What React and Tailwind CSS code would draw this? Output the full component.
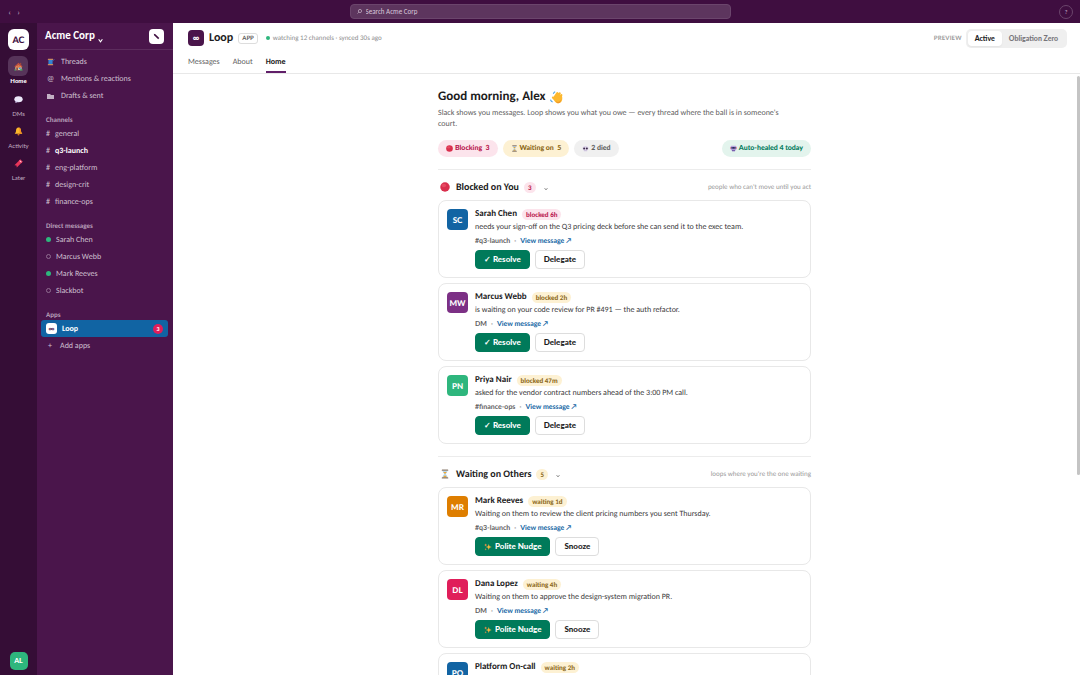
import React, { useState } from "react";

// Small colour glyphs, all on a 16x16 grid
const Glyph = ({ name, className }) => (
  <svg viewBox="0 0 16 16" className={className} aria-hidden="true">
    {name === "home" && (
      <>
        <rect x="2.5" y="7" width="11" height="7.5" fill="#e8c9a0" />
        <path d="M0.8 8.2 8 1.5 15.2 8.2 13.6 9.4 8 4.4 2.4 9.4Z" fill="#c8503c" />
        <path d="M3.6 8.4 8 4.4l4.4 4V10H3.6Z" fill="#e07a4a" />
        <rect x="10.8" y="1.6" width="2" height="3.6" fill="#a5483a" />
        <rect x="4" y="10" width="3" height="4.5" fill="#8a4b3a" />
        <rect x="8.6" y="10" width="3.4" height="2.6" fill="#3f9bd8" />
        <path d="M0.6 15c0-3 3-3 3 0ZM10.4 15c0-3.4 5-3.4 5 0Z" fill="#4aa564" />
      </>
    )}
    {name === "speech" && (
      <>
        <ellipse cx="8" cy="7.4" rx="7.4" ry="5.4" fill="#ece9fa" />
        <path d="M3.2 10 2.4 14.4 8 12Z" fill="#d5cdf0" />
      </>
    )}
    {name === "bell" && (
      <>
        <path d="M8 1c3.2 0 4.4 2.6 4.4 5.4 0 3 .8 4 2.4 5.6H1.2C2.8 10.4 3.6 9.4 3.6 6.4 3.6 3.6 4.8 1 8 1Z" fill="#fcb72b" />
        <path d="M8 1c3.2 0 4.4 2.6 4.4 5.4 0 3 .8 4 2.4 5.6H9.5C10.5 8 10 4 8 1Z" fill="#f29220" />
        <circle cx="8" cy="13.4" r="1.7" fill="#d97a1c" />
      </>
    )}
    {name === "bookmark" && (
      <>
        <path d="M11 .8 15.2 5 5 15.2 4.4 11.6.8 11Z" fill="#e8355a" />
        <path d="M11 .8 15.2 5 12.6 7.6 8.4 3.4Z" fill="#f2587a" />
        <circle cx="11.6" cy="4.4" r="1" fill="#ffd9e0" />
      </>
    )}
    {name === "thread" && (
      <>
        <rect x="3" y="3.5" width="8" height="9" fill="#3c8fe0" />
        <path d="M3 6h8M3 8.4h8M3 10.8h8" stroke="#2469b8" strokeWidth="0.8" />
        <rect x="1.6" y="1.4" width="10.8" height="2.4" rx="0.8" fill="#c98c62" />
        <rect x="1.6" y="12.2" width="10.8" height="2.4" rx="0.8" fill="#c98c62" />
        <path d="M11 6c3 0 1-3 4-3" fill="none" stroke="#3c8fe0" strokeWidth="1" />
      </>
    )}
    {name === "ball" && (
      <>
        <circle cx="8" cy="8" r="7.6" fill="#d92f4d" />
        <ellipse cx="6.2" cy="5.4" rx="3.6" ry="2.8" fill="#e64a62" />
      </>
    )}
    {name === "hourglass" && (
      <>
        <path d="M4 2.5h8c0 3.5-2.4 4-2.4 5.5s2.4 2 2.4 5.5H4c0-3.5 2.4-4 2.4-5.5S4 6 4 2.5Z" fill="#b8d9ee" />
        <path d="M5.2 4.6h5.6L8 7.8ZM5 13.4c.6-2.2 2-2.6 3-3.6 1 1 2.4 1.4 3 3.6Z" fill="#f0a830" />
        <rect x="2.8" y="0.8" width="10.4" height="2" rx="0.6" fill="#8a7a6c" />
        <rect x="2.8" y="13.2" width="10.4" height="2" rx="0.6" fill="#8a7a6c" />
      </>
    )}
    {name === "skull" && (
      <>
        <path d="M8 2c4.4 0 7 2.4 7 5.6 0 2-1.2 3.2-2.8 3.8V14H3.8v-2.6C2.2 10.8 1 9.6 1 7.6 1 4.4 3.6 2 8 2Z" fill="#dcd3ea" />
        <circle cx="4.9" cy="7.8" r="2.3" fill="#3b2a48" />
        <circle cx="11.1" cy="7.8" r="2.3" fill="#3b2a48" />
        <path d="M6.5 12v2M9.5 12v2" stroke="#8f7fa6" strokeWidth="0.8" />
      </>
    )}
    {name === "robot" && (
      <>
        <rect x="1.6" y="1.6" width="12.8" height="10.4" rx="2" fill="#b9a6dc" />
        <rect x="3" y="4.6" width="10" height="4" rx="1" fill="#33245c" />
        <circle cx="5.8" cy="6.6" r="1" fill="#5fc8f0" />
        <circle cx="10.2" cy="6.6" r="1" fill="#5fc8f0" />
        <path d="M4.4 11h7.2v3.4H4.4Z" fill="#7a5fb0" />
        <path d="M0.4 5h1.6v3.6H.4ZM14 5h1.6v3.6H14Z" fill="#e05a7a" />
      </>
    )}
    {name === "sparkles" && (
      <>
        <path d="M9.5 2 11 6.6 15.5 8 11 9.6 9.5 14 8 9.6 3.5 8 8 6.6Z" fill="#f9b83c" />
        <path d="M3.4 1 4.2 3.2 6.4 4 4.2 4.8 3.4 7 2.6 4.8.4 4l2.2-.8ZM3.4 10l.6 1.8 1.8.6-1.8.6-.6 1.8-.6-1.8L1 12.4l1.8-.6Z" fill="#f58f4a" />
      </>
    )}
    {name === "wave" && (
      <>
        <path
          d="M5 8.5 9 2.6M7 9 12 2.8M10 10 14 5M6.5 11 3.6 8"
          stroke="#fcb830"
          strokeWidth="2.6"
          strokeLinecap="round"
        />
        <path d="M5 8.5c2-3.5 7-5 9.6-3 1.4 4.5 0 9.5-4.4 9.5C6.4 15 5 12 5 8.5Z" fill="#fcb830" />
        <path d="M7 12c2 2.4 5 1.8 6.8-1.6-.2 3-1.8 4.6-3.8 4.6-1.4 0-2.6-1.2-3-3Z" fill="#f0982a" />
        <path d="M4 3.4C4.8 2 5.4 1.4 6.4 1M.6 10.6c.4 1.6 1.2 2.4 2.6 3" fill="none" stroke="#4aa3e8" strokeWidth="1.4" />
      </>
    )}
  </svg>
);

const railItems = [
  { icon: "home", label: "Home", active: true },
  { icon: "speech", label: "DMs" },
  { icon: "bell", label: "Activity" },
  { icon: "bookmark", label: "Later" },
];

const channels = ["general", "q3-launch", "eng-platform", "design-crit", "finance-ops"];

const people = [
  { name: "Sarah Chen", online: true },
  { name: "Marcus Webb", online: false },
  { name: "Mark Reeves", online: true },
  { name: "Slackbot", online: false },
];

const blocked = [
  {
    initials: "SC",
    color: "bg-[#1264a3]",
    name: "Sarah Chen",
    badge: "blocked 6h",
    urgent: true,
    text: "needs your sign-off on the Q3 pricing deck before she can send it to the exec team.",
    source: "#q3-launch",
  },
  {
    initials: "MW",
    color: "bg-[#7c3085]",
    name: "Marcus Webb",
    badge: "blocked 2h",
    text: "is waiting on your code review for PR #491 — the auth refactor.",
    source: "DM",
  },
  {
    initials: "PN",
    color: "bg-[#2eb67d]",
    name: "Priya Nair",
    badge: "blocked 47m",
    text: "asked for the vendor contract numbers ahead of the 3:00 PM call.",
    source: "#finance-ops",
  },
];

const waiting = [
  {
    initials: "MR",
    color: "bg-[#de7e00]",
    name: "Mark Reeves",
    badge: "waiting 1d",
    text: "Waiting on them to review the client pricing numbers you sent Thursday.",
    source: "#q3-launch",
  },
  {
    initials: "DL",
    color: "bg-[#e01e5a]",
    name: "Dana Lopez",
    badge: "waiting 4h",
    text: "Waiting on them to approve the design-system migration PR.",
    source: "DM",
  },
  {
    initials: "PO",
    color: "bg-[#1264a3]",
    name: "Platform On-call",
    badge: "waiting 2h",
    text: "",
    source: "",
  },
];

const TopBar = () => (
  <header className="flex h-[23px] shrink-0 items-center bg-[#3f0e40] px-[7px] text-[#cbb8cc]">
    <div className="flex flex-1 gap-1">
      <button type="button" aria-label="Back" className="w-[5px] text-[8px] leading-3">‹</button>
      <button type="button" aria-label="Forward" className="w-[5px] text-[8px] leading-3">›</button>
    </div>
    <label className="flex h-[15px] w-[381px] items-center gap-1 rounded-[4px] border border-[#6b456c] bg-[#5d355e] px-[6px]">
      <svg viewBox="0 0 10 10" className="size-[5px]" fill="none" stroke="currentColor" strokeWidth="1.4">
        <circle cx="6" cy="4" r="3.2" />
        <path d="M3.6 6.4 1 9" />
      </svg>
      <input
        type="search"
        aria-label="Search Acme Corp"
        placeholder="Search Acme Corp"
        className="min-w-0 flex-1 bg-transparent text-[7px] leading-3 outline-none placeholder:text-[#d9c9da]"
      />
    </label>
    <div className="flex flex-1 justify-end">
      <button
        type="button"
        aria-label="Help"
        className="flex size-[14px] items-center justify-center rounded-full border border-[#6b456c] font-[Lato,sans-serif] text-[6px] leading-3"
      >
        ?
      </button>
    </div>
  </header>
);

const Rail = () => (
  <nav className="flex w-[37px] shrink-0 flex-col items-center bg-[#350d36] pt-[6px] pb-[5px] font-[Lato,sans-serif]">
    <div className="flex size-[21px] items-center justify-center rounded-[6px] bg-white text-[9px] font-black text-[#3f0e40]">
      AC
    </div>
    <div className="mt-[6px] flex flex-col items-center">
      {railItems.map((item) => (
        <button
          key={item.label}
          type="button"
          className={
            item.active
              ? "flex h-[33px] flex-col items-center text-[6px] leading-2 font-black text-white"
              : "flex h-8 flex-col items-center text-[6px] leading-2 text-[#c3b0c4]"
          }
        >
          <span
            className={
              item.active
                ? "flex size-5 items-center justify-center rounded-[6px] bg-[#57345a]"
                : "flex size-5 items-center justify-center"
            }
          >
            <Glyph name={item.icon} className="size-[9px]" />
          </span>
          <span className="mt-px">{item.label}</span>
        </button>
      ))}
    </div>
    <div className="mt-auto flex size-[18px] items-center justify-center rounded-[5px] bg-[#2eb67d] text-[7px] font-black text-white">
      AL
    </div>
  </nav>
);

const SectionLabel = ({ children }) => (
  <h2 className="mt-[10px] px-[5px] text-[7px] leading-[11px] font-bold text-[#b79fb8]">{children}</h2>
);

const rowClass = "flex h-[17px] w-full items-center px-[5px] text-[8px] leading-3 text-[#cfc0d0]";

const Sidebar = () => (
  <aside className="w-[136px] shrink-0 bg-[#4a154b]">
    <div className="flex h-[27px] items-center justify-between border-b border-[#5c2c5d] pr-[9px] pl-2">
      <button type="button" className="flex items-center gap-[3px] text-[11px] leading-3 font-black text-white">
        Acme Corp
        <svg viewBox="0 0 8 8" className="mt-2 size-[5px]" fill="none" stroke="currentColor" strokeWidth="1.8">
          <path d="M1 2 4 6 7 2" />
        </svg>
      </button>
      <button
        type="button"
        aria-label="New message"
        className="flex size-[15px] items-center justify-center rounded-[4px] bg-white text-[#3f0e40]"
      >
        <svg viewBox="0 0 10 10" className="size-[7px]" fill="currentColor">
          <path d="M1 1 3.5 1.8 9 7.2 7.4 8.8 1.9 3.4Z" />
        </svg>
      </button>
    </div>

    <div className="pt-[3px] pr-[5px] pl-1">
      <div className="flex flex-col">
        <a href="#threads" className={rowClass}>
          <Glyph name="thread" className="mr-[6px] ml-px size-2" />
          Threads
        </a>
        <a href="#mentions" className={rowClass}>
          <span className="mr-[6px] w-[9px] text-center">@</span>Mentions &amp; reactions
        </a>
        <a href="#drafts" className={rowClass}>
          <svg viewBox="0 0 9 8" className="mr-[6px] h-2 w-[9px]" fill="#c3b0c4">
            <path d="M1 2h3l1 1h3v4H1Z" />
          </svg>
          Drafts &amp; sent
        </a>
      </div>

      <SectionLabel>Channels</SectionLabel>
      {channels.map((name) => (
        <a
          key={name}
          href={`#${name}`}
          className={
            name === "q3-launch"
              ? "flex h-[17px] items-center px-[5px] text-[8px] leading-3 font-black text-white"
              : rowClass
          }
        >
          <span className="mr-1 w-[5px] font-normal text-[#cfc0d0]">#</span>
          {name}
        </a>
      ))}

      <SectionLabel>Direct messages</SectionLabel>
      {people.map((person) => (
        <a key={person.name} href="#dm" className={rowClass}>
          <span
            className={
              person.online
                ? "mr-[5px] size-[5px] rounded-full bg-[#2eb67d]"
                : "mr-[5px] size-[5px] rounded-full border border-[#8f6c90]"
            }
          />
          {person.name}
        </a>
      ))}

      <SectionLabel>Apps</SectionLabel>
      <a
        href="#loop"
        className="flex h-[17px] items-center rounded-[3px] bg-[#1164a3] px-[5px] text-[8px] leading-3 font-black text-white"
      >
        <span className="mr-[5px] flex size-[11px] items-center justify-center rounded-[3px] bg-white text-[7px] text-[#4a154b]">
          ∞
        </span>
        Loop
        <span className="ml-auto flex size-[10px] items-center justify-center rounded-full bg-[#e01e5a] text-[6px]">
          3
        </span>
      </a>
      <a href="#add" className={rowClass}>
        <span className="mr-[5px] w-[9px] pl-[2px]">+</span>Add apps
      </a>
    </div>
  </aside>
);

const AppHeader = ({ mode, onMode }) => (
  <div className="shrink-0 border-b border-[#e8e8e8] pr-[13px] pl-[15px]">
    <div className="flex h-[30px] items-center justify-between">
      <div className="flex items-center">
        <div className="flex size-[16px] items-center justify-center rounded-[4px] bg-[#4a154b] font-[Lato,sans-serif] text-[9px] font-black text-white">
          ∞
        </div>
        <h1 className="ml-[5px] text-[12px] leading-4 font-black">Loop</h1>
        <span className="ml-[5px] rounded-[3px] border border-[#dddddd] px-[3px] font-[Lato,sans-serif] text-[6px] leading-[9px] font-bold text-[#616061]">
          APP
        </span>
        <span className="ml-2 size-[4px] rounded-full bg-[#2eb67d]" />
        <span className="ml-[3px] text-[7px] leading-3 text-[#8d8d8e]">watching 12 channels · synced 30s ago</span>
      </div>
      <div className="flex items-center font-[Lato,sans-serif]">
        <span className="mr-1 text-[6px] font-bold tracking-wide text-[#9a9a9a]">PREVIEW</span>
        <div className="flex rounded-[5px] bg-[#efefef] p-[2px] text-[7px] font-black">
          {["Active", "Obligation Zero"].map((name) => (
            <button
              key={name}
              type="button"
              onClick={() => onMode(name)}
              className={
                mode === name
                  ? "h-[15px] rounded-[4px] bg-white px-[7px] text-[#1d1c1d] shadow-xs"
                  : "h-[15px] rounded-[4px] px-[7px] text-[#77757a]"
              }
            >
              {name}
            </button>
          ))}
        </div>
      </div>
    </div>
    <nav className="flex gap-[13px] text-[8px] leading-[18px] text-[#616061]">
      <a href="#messages">Messages</a>
      <a href="#about">About</a>
      <a href="#home" className="border-b-2 border-[#611f69] font-black text-[#1d1c1d]">
        Home
      </a>
    </nav>
  </div>
);

const LoopCard = ({ item, primary, sparkle, secondary }) => (
  <article className="flex gap-[7px] rounded-[8px] border border-[#e8e8e8] p-2 pt-[7px]">
    <div
      className={`mt-px flex size-[21px] shrink-0 items-center justify-center rounded-[4px] font-[Lato,sans-serif] text-[8px] font-black text-white ${item.color}`}
    >
      {item.initials}
    </div>
    <div className="min-w-0 flex-1">
      <div className="flex h-3 items-center gap-[5px]">
        <h3 className="text-[9px] leading-3 font-black">{item.name}</h3>
        <span
          className={
            item.urgent
              ? "rounded-full bg-[#fce4ec] px-1 text-[7px] leading-[11px] font-bold text-[#b8134b]"
              : "rounded-full bg-[#fdf1d3] px-1 text-[7px] leading-[11px] font-bold text-[#8a6512]"
          }
        >
          {item.badge}
        </span>
      </div>
      <p className="mt-px min-h-[13px] text-[8px] leading-[13px] text-[#3c3a3c]">{item.text}</p>
      <div className="flex h-[14px] items-center gap-1 font-[Lato,sans-serif] text-[7px] font-bold text-[#616061]">
        {item.source && (
          <>
            <span>{item.source}</span>
            <span className="text-[#9a9a9a]">·</span>
            <a href="#message" className="text-[#1264a3]">
              View message ↗
            </a>
          </>
        )}
      </div>
      {item.source && (
        <div className="mt-[2px] flex gap-[5px] font-[Lato,sans-serif] text-[8px] leading-[17px] font-black">
          <button
            type="button"
            className="flex items-center gap-[3px] rounded-[4px] border border-[#007a5a] bg-[#007a5a] px-2 text-white"
          >
            {sparkle && <Glyph name="sparkles" className="size-2" />}
            {primary}
          </button>
          <button type="button" className="rounded-[4px] border border-[#dddddd] px-2 text-[#1d1c1d]">
            {secondary}
          </button>
        </div>
      )}
    </div>
  </article>
);

const LoopSection = ({ icon, title, count, countClass, hint, items, primary, sparkle, secondary }) => (
  <section className="mt-3 border-t border-[#ececec] pt-[11px]">
    <div className="mb-[7px] flex h-3 items-center">
      <Glyph name={icon} className="mr-[6px] ml-[2px] size-[10px]" />
      <h2 className="text-[10px] leading-3 font-black">{title}</h2>
      <span className={`ml-[5px] rounded-full px-1 text-[7px] leading-[11px] font-black ${countClass}`}>{count}</span>
      <button type="button" aria-label={`Collapse ${title}`} className="ml-2 pt-1 text-[#9a9a9a]">
        <svg viewBox="0 0 8 8" className="size-[4px]" fill="none" stroke="currentColor" strokeWidth="2">
          <path d="M1 2 4 6 7 2" />
        </svg>
      </button>
      <span className="ml-auto text-[7px] text-[#9a9a9a]">{hint}</span>
    </div>
    <div className="flex flex-col gap-[5px]">
      {items.map((item) => (
        <LoopCard key={item.name} item={item} primary={primary} sparkle={sparkle} secondary={secondary} />
      ))}
    </div>
  </section>
);

const pillClass = "flex items-center gap-[2px] rounded-full px-2";

const App = () => {
  const [mode, setMode] = useState("Active");

  return (
    <div className="flex h-screen flex-col overflow-hidden bg-white font-[Carlito,Lato,sans-serif] text-[#1d1c1d] [text-rendering:geometricPrecision]">
      <TopBar />
      <div className="flex min-h-0 flex-1">
        <Rail />
        <Sidebar />
        <main className="flex min-w-0 flex-1 flex-col">
          <AppHeader mode={mode} onMode={setMode} />
          <div className="flex min-h-0 flex-1">
            <div className="min-w-0 flex-1 overflow-y-auto [scrollbar-width:none]">
              <div className="mx-auto max-w-[373px] pt-[15px] pb-8">
                <h1 className="flex items-center gap-1 text-[13px] leading-4 font-black">
                  Good morning, Alex
                  <Glyph name="wave" className="size-[13px]" />
                </h1>
                <p className="mt-[3px] max-w-[355px] text-[8px] leading-[11px] text-[#616061]">
                  Slack shows you messages. Loop shows you what you owe — every thread where the ball is in
                  someone&apos;s court.
                </p>
                <div className="mt-[10px] flex gap-[5px] font-[Lato,sans-serif] text-[7px] leading-[17px] font-black">
                  <span className={`${pillClass} bg-[#fce4ec] text-[#b8134b]`}>
                    <Glyph name="ball" className="size-[7px]" />
                    Blocking&nbsp; 3
                  </span>
                  <span className={`${pillClass} bg-[#fdf1d3] text-[#8a6512]`}>
                    <Glyph name="hourglass" className="size-[7px]" />
                    Waiting on&nbsp; 5
                  </span>
                  <span className={`${pillClass} bg-[#f0f0f0] text-[#616061]`}>
                    <Glyph name="skull" className="size-[7px]" />
                    2 died
                  </span>
                  <span className={`${pillClass} ml-auto bg-[#e3f4ed] text-[#007a5a]`}>
                    <Glyph name="robot" className="size-[7px]" />
                    Auto-healed 4 today
                  </span>
                </div>
                <LoopSection
                  icon="ball"
                  title="Blocked on You"
                  count={3}
                  countClass="bg-[#fce4ec] text-[#b8134b]"
                  hint="people who can't move until you act"
                  items={blocked}
                  primary="✓ Resolve"
                  secondary="Delegate"
                />
                <LoopSection
                  icon="hourglass"
                  title="Waiting on Others"
                  count={5}
                  countClass="bg-[#fdf1d3] text-[#8a6512]"
                  hint="loops where you're the one waiting"
                  items={waiting}
                  primary="Polite Nudge"
                  sparkle
                  secondary="Snooze"
                />
              </div>
            </div>
            <div className="w-1 shrink-0 pt-[2px]">
              <div className="ml-px h-2/3 rounded-xs bg-[#c4c4c4]" />
            </div>
          </div>
        </main>
      </div>
    </div>
  );
};

export default App;
